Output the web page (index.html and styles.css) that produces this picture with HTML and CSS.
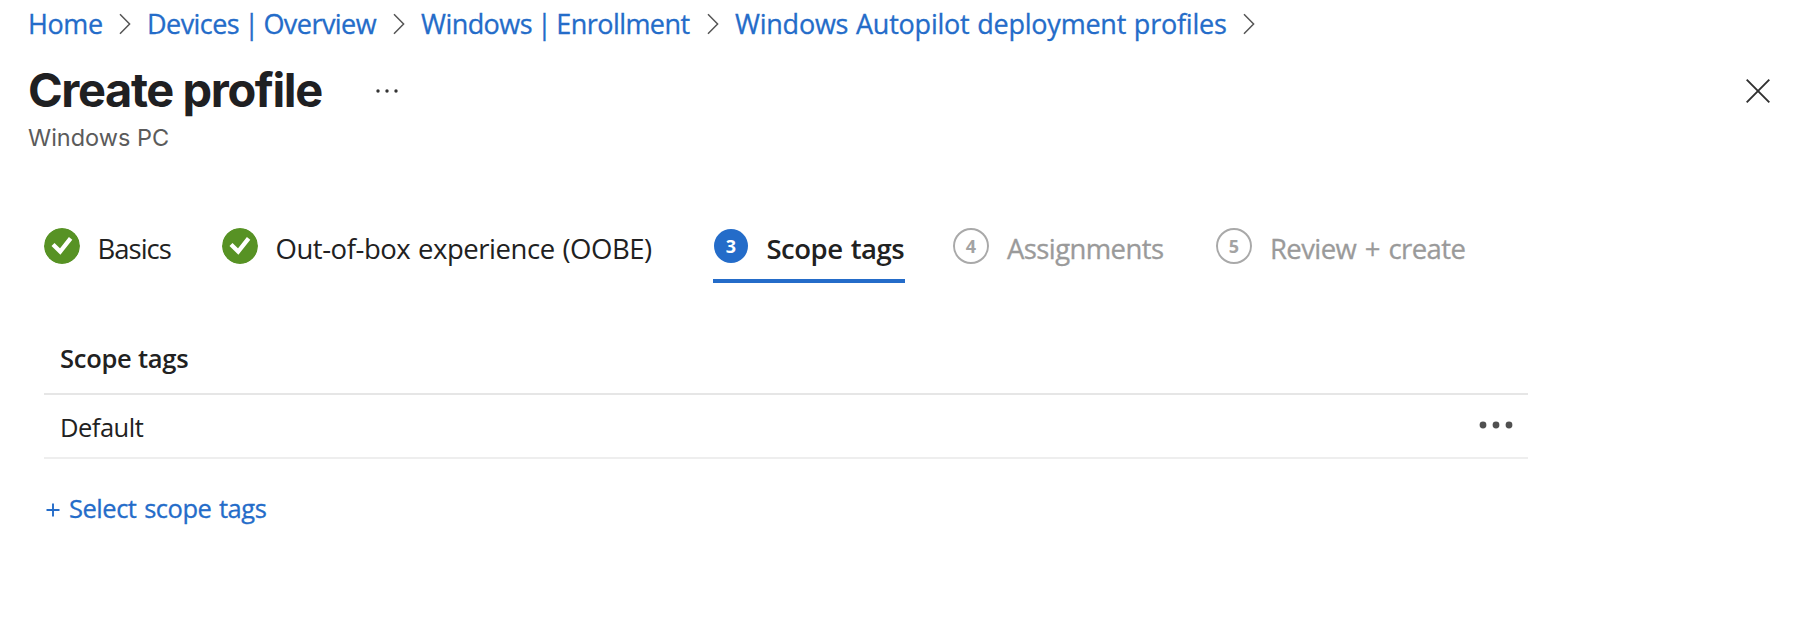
FILE: index.html
```
<!DOCTYPE html>
<html lang="en">
<head>
<meta charset="utf-8">
<title>Create profile</title>
<link rel="stylesheet" href="styles.css">
</head>
<body>
<nav class="breadcrumb">
<a class="crumb crumb-home">Home</a><svg class="chevron" viewBox="0 0 12 22"><path d="M1 1.2 L10.6 11 L1 20.8"/></svg>
<a class="crumb crumb-devices">Devices <span class="bar">|</span> Overview</a><svg class="chevron" viewBox="0 0 12 22"><path d="M1 1.2 L10.6 11 L1 20.8"/></svg>
<a class="crumb crumb-windows">Windows <span class="bar">|</span> Enrollment</a><svg class="chevron" viewBox="0 0 12 22"><path d="M1 1.2 L10.6 11 L1 20.8"/></svg>
<a class="crumb crumb-autopilot">Windows Autopilot deployment profiles</a><svg class="chevron" viewBox="0 0 12 22"><path d="M1 1.2 L10.6 11 L1 20.8"/></svg>
</nav>
<header class="header">
<h1 class="title">Create profile</h1>
<svg class="title-more" viewBox="0 0 24 6"><circle cx="3" cy="3" r="1.7"/><circle cx="12" cy="3" r="1.7"/><circle cx="21" cy="3" r="1.7"/></svg>
<svg class="close" viewBox="0 0 24 24"><path d="M.7 .7 L23.3 23.3 M23.3 .7 L.7 23.3"/></svg>
</header>
<p class="subtitle">Windows PC</p>
<div class="steps">
<div class="step step-basics"><svg class="badge" viewBox="0 0 36 36"><circle class="done" cx="18" cy="18" r="18"/><path class="check" d="M9 16.5 L16.2 23.6 L26.6 10.4"/></svg><span class="label">Basics</span></div>
<div class="step step-oobe"><svg class="badge" viewBox="0 0 36 36"><circle class="done" cx="18" cy="18" r="18"/><path class="check" d="M9 16.5 L16.2 23.6 L26.6 10.4"/></svg><span class="label">Out-of-box experience (OOBE)</span></div>
<div class="step step-scope active"><span class="badge number">3</span><span class="label">Scope tags</span></div>
<div class="step step-assign pending"><span class="badge number">4</span><span class="label">Assignments</span></div>
<div class="step step-review pending"><span class="badge number">5</span><span class="label">Review + create</span></div>
</div>
<main class="table">
<div class="row head"><span class="head-text">Scope tags</span></div>
<div class="row item"><span class="item-text">Default</span><svg class="row-more" viewBox="0 0 34 8"><circle cx="4" cy="4" r="3.4"/><circle cx="17" cy="4" r="3.4"/><circle cx="30" cy="4" r="3.4"/></svg></div>
</main>
<a class="select"><svg class="plus" viewBox="0 0 14 14"><path d="M7 .5 V13.5 M.5 7 H13.5"/></svg><span class="select-text">Select scope tags</span></a>
</body>
</html>
```
FILE: styles.css
```
* { box-sizing: border-box; }
body { margin: 0; background: #fff; color: #212121; font-family: "Open Sans", "Noto Sans", sans-serif; font-weight: 430; white-space: nowrap; overflow: hidden; }
.breadcrumb { display: flex; align-items: center; height: 48px; padding-left: 28px; }
.crumb { color: #246cc9; font-size: 27px; line-height: 40px; margin-right: 17px; }
.crumb, .select-text, .pending .label { -webkit-text-stroke: 0.3px currentColor; }
.crumb-home { width: 74px; letter-spacing: -0.4px; }
.crumb-devices { width: 229px; letter-spacing: -0.55px; }
.crumb-windows { width: 269px; letter-spacing: -0.55px; }
.crumb-autopilot { width: 491px; letter-spacing: -0.23px; word-spacing: 1px; }
.bar { margin: 0 -1.5px; }
.chevron { width: 12px; height: 22px; margin-right: 16px; fill: none; stroke: #555; stroke-width: 1.5; flex: none; }
.header { display: flex; align-items: center; height: 72px; padding-left: 28px; margin-top: 6px; }
.title { margin: 0; width: 296px; font: 700 47px/60px Inter, sans-serif; letter-spacing: -1.4px; color: #1f2022; }
.title-more { width: 24px; height: 6px; margin: 1px 0 0 51px; fill: #333; }
.close { width: 24px; height: 24px; margin: 1px 28px 0 auto; stroke: #303030; stroke-width: 1.9; fill: none; }
.subtitle { margin: -4px 0 0; padding-left: 28px; font: 400 23.5px/32px Inter, sans-serif; color: #5b5b5b; }
.steps { display: flex; padding-left: 44px; margin-top: 73px; height: 56px; }
.step { display: flex; height: 56px; border-bottom: 4px solid transparent; }
.badge { width: 36px; height: 36px; margin-top: 1px; flex: none; border-radius: 50%; }
.done { fill: #579224; }
.check { fill: none; stroke: #fff; stroke-width: 4.3; }
.number { display: flex; align-items: center; justify-content: center; font-size: 18px; font-weight: 700; line-height: 32px; }
.label { font-size: 27.5px; line-height: 44px; }
.step-basics { width: 178px; }
.step-oobe { width: 491px; }
.step-basics .label { margin-left: 17.5px; letter-spacing: -1px; }
.step-oobe .label { margin-left: 17.5px; letter-spacing: -0.45px; word-spacing: 1px; }
.active { width: 192px; margin-right: 48px; border-bottom-color: #246cc9; }
.active .badge { width: 34px; height: 34px; margin: 2px 0 0 1px; background: #246cc9; color: #fff; }
.active .label { font-weight: 600; margin-left: 18.5px; letter-spacing: -0.5px; word-spacing: 1.5px; }
.pending { color: #9a9a9a; }
.pending .badge { border: 2px solid #a9a9a9; color: #a3a3a3; }
.pending .label { margin-left: 18px; letter-spacing: -0.6px; word-spacing: 2px; }
.step-assign { width: 263px; }
.table { margin: 48px 0 0 44px; width: 1484px; }
.row { display: flex; align-items: center; padding-left: 16px; font-size: 25.5px; }
.head { height: 64px; border-bottom: 2px solid #e6e6e6; line-height: 54px; align-items: flex-start; font-weight: 600; letter-spacing: -0.25px; }
.item { height: 64px; border-bottom: 2px solid #eee; padding-top: 2px; letter-spacing: -0.5px; }
.row-more { width: 34px; height: 8px; margin: -4px 15px 0 auto; fill: #505050; }
.select { display: flex; align-items: center; margin: 29px 0 0 46px; height: 40px; color: #246cc9; font-size: 25.5px; }
.plus { width: 14px; height: 14px; margin-top: 3px; fill: none; stroke: #246cc9; stroke-width: 1.9; }
.select-text { margin-left: 9px; letter-spacing: -0.48px; word-spacing: 1.5px; }
```
